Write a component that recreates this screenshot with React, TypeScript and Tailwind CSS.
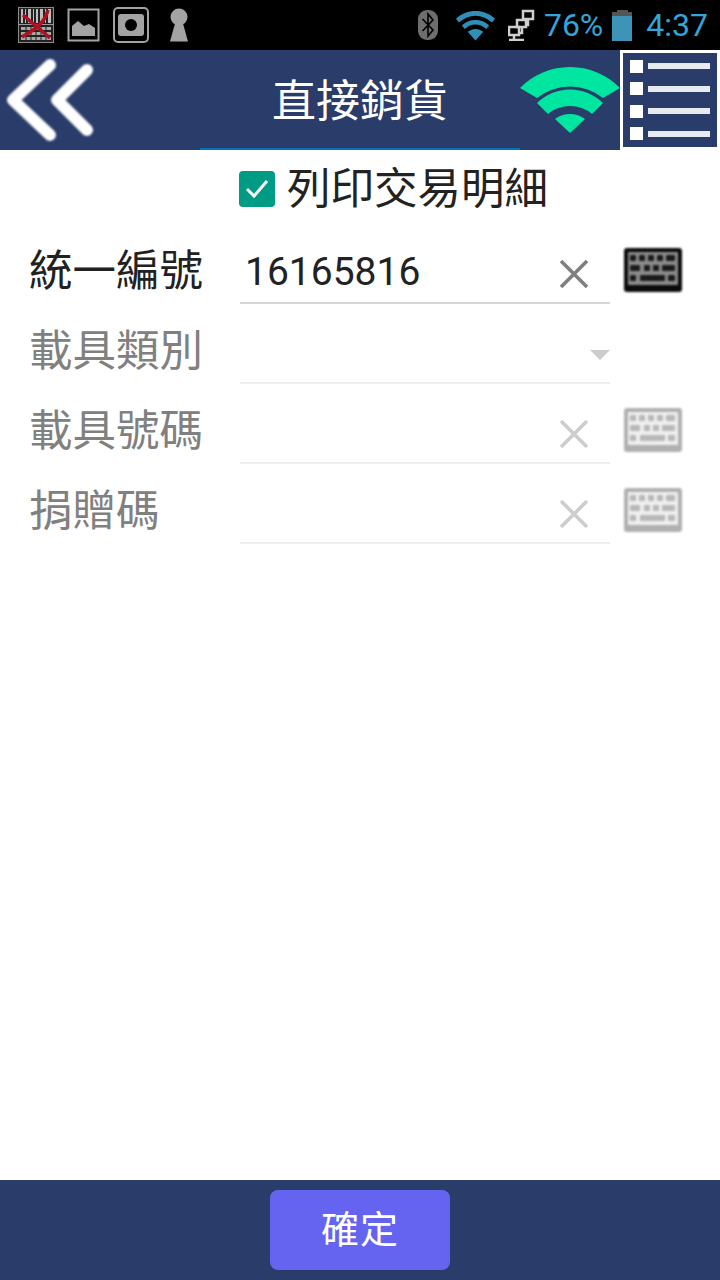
import React from "react";

const font = { fontFamily: '"Roboto", "Noto Sans CJK TC", sans-serif' };

const StatusBar = () => (
  <div className="flex h-[50px] items-center bg-black pl-[18px] pr-[12px]">
    {/* barcode icon with the red cross */}
    <svg width="36" height="36" viewBox="0 0 36 36" className="shrink-0">
      <rect x="0.5" y="0.5" width="35" height="35" fill="#222" stroke="#8a8a8a" />
      <g fill="#bdbdbd">
        <rect x="3" y="2" width="2" height="14" />
        <rect x="7" y="2" width="1" height="14" />
        <rect x="10" y="2" width="3" height="14" />
        <rect x="15" y="2" width="1" height="14" />
        <rect x="18" y="2" width="2" height="14" />
        <rect x="22" y="2" width="3" height="14" />
        <rect x="27" y="2" width="1" height="14" />
        <rect x="30" y="2" width="3" height="14" />
      </g>
      <rect x="0" y="17" width="36" height="1" fill="#9a9a9a" />
      <g fill="#a8a8a8">
        <rect x="3" y="20" width="30" height="3" />
        <rect x="3" y="25" width="30" height="3" />
        <rect x="3" y="30" width="30" height="3" />
      </g>
      <g stroke="#222" strokeWidth="1">
        <path d="M8 19V34M13 19V34M18 19V34M23 19V34M28 19V34" />
      </g>
      <path d="M4 30C14 24 26 18 30 3" stroke="#b01020" strokeWidth="3.5" fill="none" />
      <path d="M5 8L32 31" stroke="#b01020" strokeWidth="3.5" fill="none" />
    </svg>
    {/* picture */}
    <svg width="34" height="34" viewBox="0 0 34 34" className="ml-[13px] shrink-0">
      <rect x="1.5" y="1.5" width="30" height="31" fill="none" stroke="#a3a3a3" strokeWidth="2" />
      <path d="M5 28V18L11 13L17 18L22 16L28 20V28Z" fill="#a3a3a3" />
    </svg>
    {/* camera like square */}
    <svg width="36" height="36" viewBox="0 0 36 36" className="ml-[12px] shrink-0">
      <rect x="1" y="1" width="34" height="34" rx="4" fill="none" stroke="#a3a3a3" strokeWidth="2" />
      <rect x="5" y="7" width="26" height="22" rx="3" fill="#a3a3a3" />
      <circle cx="18" cy="18" r="6" fill="#000" />
    </svg>
    {/* keyhole */}
    <svg width="18" height="34" viewBox="0 0 18 34" className="ml-[21px] shrink-0">
      <circle cx="9" cy="9" r="8.5" fill="#a3a3a3" />
      <path d="M6 12H12L18 33.5H0Z" fill="#a3a3a3" />
    </svg>

    <div className="flex-1" />

    {/* bluetooth */}
    <svg width="20" height="30" viewBox="0 0 20 30" className="shrink-0">
      <rect x="0" y="0" width="20" height="30" rx="9" fill="#6e6e6e" />
      <path d="M4.5 9L15 20L10 26V4L15 10L4.5 21" fill="none" stroke="#000" strokeWidth="1.6" />
    </svg>
    {/* wifi */}
    <svg width="39" height="31" viewBox="0 0 40 31" className="ml-[18px] shrink-0">
      <path d="M0 8.5C11 -2 29 -2 40 8.5L37 12.5C27 3 13 3 3 12.5Z" fill="#2f8fb8" />
      <path d="M6 15.5C14 8 26 8 34 15.5L31 19C24 13 16 13 9 19Z" fill="#2f8fb8" />
      <path d="M12 22C17 18 23 18 28 22L20 31Z" fill="#2f8fb8" />
    </svg>
    {/* network */}
    <svg width="28" height="32" viewBox="0 0 28 32" className="ml-[13px] shrink-0">
      <g fill="none" stroke="#cfcfcf" strokeWidth="2.5">
        <rect x="15" y="2" width="10" height="8" />
        <rect x="9" y="11" width="9" height="7" />
        <rect x="1" y="18" width="10" height="8" />
        <path d="M20 10V16H17M6 26V31M1 31H16M14 18V24H11" />
      </g>
    </svg>
    <span className="ml-[8px] text-[32px] leading-none text-[#33a5dc]" style={font}>
      76%
    </span>
    {/* battery */}
    <div className="ml-[9px] flex shrink-0 flex-col items-center">
      <div className="h-[2px] w-[11px] bg-[#555]" />
      <div className="h-[29px] w-[20px] bg-[#555] pt-[4px]">
        <div className="h-full w-full bg-[#3d93b8]" />
      </div>
    </div>
    <span className="ml-[14px] text-[32px] leading-none text-[#33a5dc]" style={font}>
      4:37
    </span>
  </div>
);

const Header = () => (
  <div className="relative flex h-[100px] items-center bg-[#2a3c69]">
    <svg width="100" height="100" viewBox="0 0 100 100" className="shrink-0 blur-[1px]">
      <path
        d="M50 15L13 50L50 85M87 20L57 50L87 80"
        fill="none"
        stroke="#fff"
        strokeWidth="12"
        strokeLinecap="round"
        strokeLinejoin="round"
      />
    </svg>
    <div className="flex-1 pl-[100px] pt-[3px] text-center text-[44px] leading-none text-white" style={font}>
      直接銷貨
    </div>
    <svg width="100" height="66" viewBox="0 0 100 66" className="shrink-0 blur-[0.5px]">
      <path d="M0 21A70 70 0 0 1 100 21L83 31A53 53 0 0 0 17 31Z" fill="#00e5a0" />
      <path d="M17 36A47 47 0 0 1 83 36L72 47A34 34 0 0 0 28 47Z" fill="#00e5a0" />
      <path d="M35 52A25 25 0 0 1 65 52L50 66Z" fill="#00e5a0" />
    </svg>
    <div className="flex h-[100px] w-[100px] shrink-0 flex-col justify-center gap-[9.5px] border-[3px] border-white bg-[#2a3c69] px-[7px]">
      {[0, 1, 2, 3].map((i) => (
        <div key={i} className="flex items-center gap-[5px] blur-[0.5px]">
          <div className="h-[13px] w-[13px] bg-white" />
          <div className="h-[6px] flex-1 bg-[#e8eaf0]" />
        </div>
      ))}
    </div>
    <div className="absolute bottom-0 left-[200px] h-[2px] w-[320px] bg-[#0a6fb5]" />
  </div>
);

const ClearIcon = ({ color }: { color: string }) => (
  <svg width="30" height="30" viewBox="0 0 30 30" className="shrink-0">
    <path d="M2 2L28 28M28 2L2 28" stroke={color} strokeWidth="3.6" fill="none" />
  </svg>
);

const KeyboardIcon = ({ dark }: { dark: boolean }) => {
  const body = dark ? "#0a0a0a" : "#b0b0b0";
  const bg = dark ? "#8c8c8c" : "#efefef";
  const key = dark ? "#1a1a1a" : "#b8b8b8";
  return (
    <svg width="58" height="44" viewBox="0 0 58 44" className="shrink-0 blur-[0.8px]">
      <rect x="0" y="0" width="58" height="44" rx="3" fill={body} />
      <rect x="4" y="4" width="50" height="33" fill={bg} />
      <g fill={key}>
        {[6, 15, 24, 33, 42].map((x) => (
          <rect key={x} x={x} y="7" width={x === 42 ? 9 : 6} height="6" rx="1" />
        ))}
        <rect x="6" y="17" width="10" height="6" rx="1" />
        <rect x="20" y="17" width="6" height="6" rx="1" />
        <rect x="29" y="17" width="6" height="6" rx="1" />
        <rect x="38" y="17" width="13" height="6" rx="1" />
        <rect x="6" y="27" width="6" height="6" rx="1" />
        <rect x="16" y="27" width="25" height="6" rx="1" />
        <rect x="44" y="27" width="7" height="6" rx="1" />
      </g>
    </svg>
  );
};

type RowProps = {
  label: string;
  value?: string;
  active?: boolean;
  select?: boolean;
};

const FormRow = ({ label, value, active, select }: RowProps) => (
  <div className="flex h-[80px] items-start">
    <div
      className={`w-[240px] shrink-0 pl-[29px] pt-[22px] text-[43.5px] leading-[52px] ${
        active ? "text-[#212121]" : "text-[#808080]"
      }`}
    >
      {label}
    </div>
    <div
      className={`flex h-full w-[370px] shrink-0 items-center justify-between border-b-2 pl-[5px] pt-[20px] ${
        active ? "border-[#d6d6d6]" : "border-[#eeeeee]"
      }`}
    >
      <span className="mb-[2px] text-[39px] leading-none text-[#222]" style={font}>
        {value}
      </span>
      {select ? (
        <div className="mt-[4px] h-0 w-0 border-x-[10px] border-t-[10px] border-x-transparent border-t-[#cccccc]" />
      ) : (
        <div className="mr-[21px] mt-[2px]">
          <ClearIcon color={active ? "#7f7f7f" : "#cdcdcd"} />
        </div>
      )}
    </div>
    {!select && (
      <div className="ml-[14px] mt-[24px]">
        <KeyboardIcon dark={!!active} />
      </div>
    )}
  </div>
);

export default function App() {
  return (
    <div className="flex h-[1280px] w-[720px] flex-col overflow-hidden bg-white" style={font}>
      <StatusBar />
      <Header />

      <div className="flex-1">
        <div className="flex h-[74px] items-center pl-[239px] pt-[4px]">
          <div className="flex h-[36px] w-[36px] items-center justify-center rounded-[4px] bg-[#009b85]">
            <svg width="26" height="22" viewBox="0 0 26 22">
              <path d="M3 11L10 18L23 3" fill="none" stroke="#fff" strokeWidth="3" />
            </svg>
          </div>
          <span className="ml-[12px] mt-[2px] text-[43.5px] leading-none text-[#222]">列印交易明細</span>
        </div>
        <FormRow label="統一編號" value="16165816" active />
        <FormRow label="載具類別" select />
        <FormRow label="載具號碼" />
        <FormRow label="捐贈碼" />
      </div>

      <div className="flex h-[100px] items-center justify-center bg-[#2a3c69]">
        <button className="h-[80px] w-[180px] rounded-[8px] bg-[#6464f0] text-[38px] tracking-[1px] text-white">
          確定
        </button>
      </div>
    </div>
  );
}
